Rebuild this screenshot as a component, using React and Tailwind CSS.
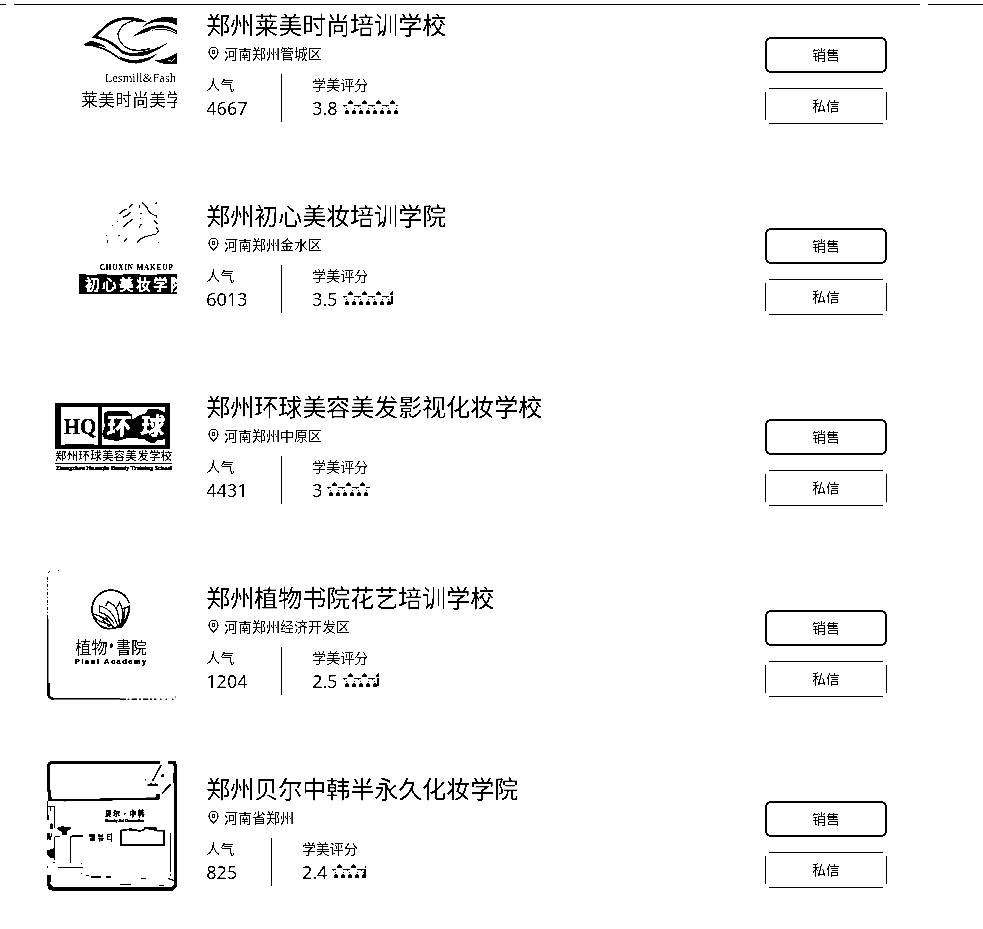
import React from "react";

const SANS = "font-['Noto_Sans','Noto_Sans_CJK_SC',sans-serif]";

function LesmillLogo() {
  return (
    <g transform="translate(-7 3) scale(0.33333)">
      <path d="M128 136Q145 121 158 124Q182 128 205 147Q250 184 285 180Q320 178 354 160Q330 184 296 190Q258 194 225 169Q185 139 128 136Z" />
      <path d="M157 113Q180 90 200 72Q225 53 262 51Q298 53 320 65Q300 68 280 62Q247 55 222 68Q195 80 172 109L190 115Q218 122 240 147Q265 166 299 157Q343 151 382 130Q350 154 318 165Q280 173 248 161Q212 129 195 123Q180 116 157 113Z" stroke="black" strokeWidth="1" />
      <path d="M280 62Q243 70 234 102Q236 133 265 146Q292 157 330 146" fill="none" stroke="black" strokeWidth="4" />
      <path d="M304 83Q330 55 372 51Q395 50 411 55V76Q375 60 340 67Q325 71 304 83Z" />
      <path d="M276 112Q300 88 340 77Q380 71 411 91V104Q385 86 350 90Q310 95 276 112Z" />
      <path d="M330 91Q370 75 408 97" stroke="white" strokeWidth="3" fill="none" />
      <path d="M340 179Q375 182 411 158V192H378Q360 190 340 179Z" />
      <path d="M385 181l10 3l9-9" stroke="white" strokeWidth="3" fill="none" />
      <path d="M175 138Q210 145 242 175" stroke="white" strokeWidth="3" fill="none" />
      <text x="194" y="247" fontSize="40" textLength="214" lengthAdjust="spacingAndGlyphs" fontFamily="Liberation Serif, serif">Lesmill&amp;Fash</text>
      <text x="124" y="319" fontSize="50" letterSpacing="1" fontFamily="Noto Sans CJK SC, sans-serif">莱美时尚美学</text>
    </g>
  );
}

function ChuxinLogo() {
  return (
    <g transform="translate(13 2) scale(0.33333)">
      <g fill="none" stroke="black" strokeWidth="3.8">
        <path d="M178 71L190 62L202 57M207 53L218 43M189 82L202 76L214 65M190 112L204 98L218 88M156 106h3M171 95h3M139 134v3M142 150v9M175 139l5-4M193 155l7-10" />
        <path d="M239 44v10M243 68v4M242 83v5M237 113l7-11M246 37Q261 49 264 60Q274 75 288 77L291 84M282 90L293 103M288 112L296 122L289 132Q260 137 244 145Q236 150 232 158M286 42l4-5M295 157h3" />
      </g>
      <text x="119" y="241" fontSize="22" fontWeight="700" textLength="219" stroke="black" strokeWidth="0.6" fontFamily="Liberation Serif, serif">CHUXIN MAKEUP</text>
      <path d="M57 252H78V255H110V252H140V255H190V252H240V255H290V252H351V312H57Z" />
      <text x="75" y="301" fontSize="44" letterSpacing="7" fontWeight="500" fill="white" stroke="white" strokeWidth="1" fontFamily="Noto Sans CJK SC, sans-serif">初心美妆学院</text>
    </g>
  );
}

function HuanqiuLogo() {
  return (
    <g transform="translate(-7 11) scale(0.33333)">
      <path d="M45 39H390V177H45Z" />
      <path d="M63 51H174V165H162V162H75V165H63ZM186 51H375V165H186Z" fill="white" />
      <path d="M192 68L205 63H262L276 74L278 90L292 78L318 70L324 58L352 56L372 66H378V148L352 150L346 158H330L312 147L268 143L230 153L194 147L186 132L194 110Z" />
      <text x="71" y="132" fontSize="72" fontWeight="700" textLength="98" stroke="black" strokeWidth="1" lengthAdjust="spacingAndGlyphs" fontFamily="Liberation Serif, serif">HQ</text>
      <g fill="white" stroke="white" strokeWidth="1" fontSize="72" fontWeight="700" fontFamily="Noto Sans CJK SC, sans-serif">
        <text transform="translate(199 134) skewX(-5)">环</text>
        <text transform="translate(300 134) skewX(-5)">球</text>
      </g>
      <text x="45" y="210" fontSize="34" textLength="351" fontWeight="500" fontFamily="Noto Sans CJK SC, sans-serif">郑州环球美容美发学校</text>
      <path d="M45 219H396V222H45Z" />
      <text x="47" y="240" fontSize="18" fontWeight="700" textLength="349" stroke="black" strokeWidth="1" lengthAdjust="spacingAndGlyphs" fontFamily="Liberation Serif, serif">Zhengzhou Huanqiu Beauty Training School</text>
    </g>
  );
}

function PlantLogo() {
  return (
    <g transform="translate(-7 -10) scale(0.33333)">
      <g fill="none" stroke="black">
        <path d="M23 175V400Q24 416 40 416" strokeWidth="5" />
        <path d="M23 50V175" strokeWidth="4" strokeDasharray="9 5 3 6" />
        <path d="M25 38l6-5M54 31h4" strokeWidth="3.5" />
        <path d="M27 370V408L36 416H240" strokeWidth="5" />
        <path d="M240 417.5H350" strokeWidth="3.5" strokeDasharray="18 4 7 5" />
        <path d="M360 417.5h5M376 417.5h5M396 417.5h5M405 411h3" strokeWidth="3.5" />
        <path d="M268 130A57 57 0 1 0 159 166" strokeWidth="5" />
        <path d="M159 166Q175 207 211 206Q262 202 268 139L250 146" strokeWidth="5" />
        <path d="M157 161Q177 165 200 180Q218 195 224 205M157 164Q170 181 190 188L219 198M179 159V138Q196 141 210 155Q229 176 234 204M197 139L203 125Q221 132 230 148Q240 177 237 204M229 144L239 127Q252 150 247 175L240 203M253 145Q255 181 242 202M268 140Q268 175 244 202M180 158Q205 163 222 190M175 166L194 180M197 170L211 190M188 180L208 201" strokeWidth="3.8" />
      </g>
      <text x="105" y="281" fontSize="52" textLength="98" fontWeight="400" lengthAdjust="spacingAndGlyphs" fontFamily="Noto Sans CJK SC, sans-serif">植物</text>
      <path d="M209 255l6-6l4 7l-3 8l-6 1Z" />
      <text x="227" y="281" fontSize="52" textLength="93" fontWeight="400" lengthAdjust="spacingAndGlyphs" fontFamily="Noto Sans CJK SC, sans-serif">書院</text>
      <text x="105" y="312" fontSize="22" fontWeight="700" stroke="black" strokeWidth="1.2" textLength="213" fontFamily="Liberation Sans, sans-serif">Plant Academy</text>
    </g>
  );
}

function BeierLogo() {
  return (
    <g transform="translate(-7 -11) scale(0.33333)">
      <g fill="none" stroke="black">
        <path d="M360 37H36Q25 39 25 52V110L31 148" strokeWidth="9" />
        <path d="M27 105V150L75 151L355 145V132" strokeWidth="7" />
        <path d="M385 36L404 39L407 55V407L396 417H38L26 405V376" strokeWidth="10" />
        <path d="M404 70V100" strokeWidth="11" />
        <path d="M393 102L366 131" strokeWidth="6" />
        <path d="M364 45L352 65L344 82L337 93M315 89h4M322 105h33M333 100v7M346 100v7M364 80l6-8" strokeWidth="4.5" />
        <path d="M23 154V195M23 169H43V213M31 170v14M24 197v14M36 220l-5 15M43 212v22M23 250V270M36 250L30 270M43 260V282M45 260H60M43 282V330M42 335v4M23 348v6M55 352H130M124 338v4M124 368v4M138 377h9M153 381H183M198 381H213M303 385H318M240 403H273M357 406H372" strokeWidth="3.8" />
        <path d="M92 338V260H128M96 257H130" strokeWidth="4" />
        <path d="M391 248V366M391 372v5M385 386L403 392V406" strokeWidth="3.8" />
        <path d="M250 241H243V285H372V242H350L335 235L313 233M250 241L270 237L290 241L300 243L315 238" strokeWidth="5" />
      </g>
      <path d="M51 234L65 229L92 232V238L81 242V255H66V245L54 239Z" />
      <path d="M22 301L42 295V324H33L22 316ZM20 196h8v15h-8ZM362 75h9v6h-9ZM350 130l8 4v14h-14ZM267 236h24v7h-24ZM325 232h25v7h-25ZM22 404l18 8v7H26Z" />
      <path d="M31 222h8v14h-8ZM22 250h8v18h-8ZM22 376h10v20H22Z" />
      <text x="195" y="199" fontSize="20" fontWeight="700" textLength="118" stroke="black" strokeWidth="1.4" fontFamily="Noto Sans CJK SC, sans-serif">贝尔·中韩</text>
      <text x="195" y="216" fontSize="12" fontWeight="700" textLength="117" stroke="black" strokeWidth="1.2" fontFamily="Liberation Sans, sans-serif">Beauty Art Cosmetics</text>
      <text x="147" y="271" fontSize="21" fontWeight="700" textLength="72" stroke="black" strokeWidth="1" fontFamily="Noto Sans CJK KR, sans-serif">벨뷰티</text>
    </g>
  );
}

const schools = [
  { name: "郑州莱美时尚培训学校", place: "河南郑州管城区", views: 4667, score: 3.8, stars: 55, Logo: LesmillLogo },
  { name: "郑州初心美妆培训学院", place: "河南郑州金水区", views: 6013, score: 3.5, stars: 50, Logo: ChuxinLogo },
  { name: "郑州环球美容美发影视化妆学校", place: "河南郑州中原区", views: 4431, score: 3, stars: 43, Logo: HuanqiuLogo },
  { name: "郑州植物书院花艺培训学校", place: "河南郑州经济开发区", views: 1204, score: 2.5, stars: 36, Logo: PlantLogo },
  { name: "郑州贝尔中韩半永久化妆学院", place: "河南省郑州", views: 825, score: 2.4, stars: 34, Logo: BeierLogo },
];

function Stars({ width }) {
  const partial = width % 14 > 3 && width < 54;
  return (
    <span className="ml-[5px] mt-[4px] block h-[15px] overflow-hidden" style={{ width }}>
      <svg width="70" height="15" shapeRendering="crispEdges">
        {[0, 14, 28, 42, 56].map((x) => (
          <path
            key={x}
            transform={`translate(${x} 0)`}
            d="M7 0h1v1h1v2H6V1h1ZM0 5h4v1H0ZM1 6h1v1H1ZM11 5h3v1h-3ZM3 8h1v1H3ZM11 8h1v1h-1ZM3 10h2v1h1v2H2v-2h1ZM10 10h2v1h1v2H9v-2h1Z"
            transform-origin="0 0"
          />
        ))}
        {partial && <path d={`M${width - 2} 5h2v8h-2Z`} />}
        {[0, 14, 28, 42, 56].map((x) => (
          <path key={`p${x}`} transform={`translate(${x} 0)`} d="M5 2h5v2H5ZM2 12h4v2H2ZM9 12h4v2H9Z" />
        ))}
      </svg>
    </span>
  );
}

function School({ school }) {
  const { Logo } = school;
  return (
    <article className="flex h-[191px] pl-[47px]">
      <svg className="h-[130px] w-[130px] shrink-0" viewBox="0 0 130 130">
        <Logo />
      </svg>
      <div className="ml-[29px] flex w-[559px] shrink-0 flex-col pt-[10px]">
        <h2 className="h-[37px] pl-[0.3px] text-2xl leading-9 whitespace-nowrap">{school.name}</h2>
        <div className="flex h-5 items-center text-sm leading-5">
          <svg className="mr-[5px] ml-[2px] h-[13px] w-[11px] -translate-y-px" viewBox="0 0 11 13" fill="none" stroke="black" strokeWidth="1.2">
            <path d="M5.5 12Q1 8 1 5A4.5 4.5 0 0 1 10 5Q10 8 5.5 12Z" />
            <circle cx="5.5" cy="5" r="1.3" />
          </svg>
          {school.place}
        </div>
        <div className="mt-[10px] flex h-12">
          <div className="border-r border-black pr-[33.7px] pl-[0.3px]">
            <div className="h-[22px] text-sm leading-[22px]">人气</div>
            <div className="text-lg leading-[25px]">{school.views}</div>
          </div>
          <div className="pl-[30px]">
            <div className="h-[22px] text-sm leading-[22px]">学美评分</div>
            <div className="flex text-lg leading-[25px]">
              {school.score}
              <Stars width={school.stars} />
            </div>
          </div>
        </div>
      </div>
      <div className="flex w-[122px] shrink-0 flex-col gap-[15px] pt-10 text-sm">
        <button className="flex h-9 items-center justify-center rounded-md border-2 border-black">销售</button>
        <button className="flex h-9 flex-col justify-between">
          <span className="mx-1 block h-px self-stretch bg-black" />
          <span className="flex h-7 items-center justify-center self-stretch border-x border-black">私信</span>
          <span className="mx-1 block h-px self-stretch bg-black" />
        </button>
      </div>
    </article>
  );
}

export default function App() {
  return (
    <main className={`h-[929px] w-[983px] overflow-hidden bg-white text-black contrast-[20] ${SANS}`}>
      <div className="flex h-[5px] items-end gap-2">
        <span className="h-px w-[6px] bg-black" />
        <span className="h-px w-[906px] bg-black" />
        <span className="h-px flex-1 bg-black" />
      </div>
      <section className="-mt-2">
        {schools.map((school) => (
          <School key={school.name} school={school} />
        ))}
      </section>
    </main>
  );
}
